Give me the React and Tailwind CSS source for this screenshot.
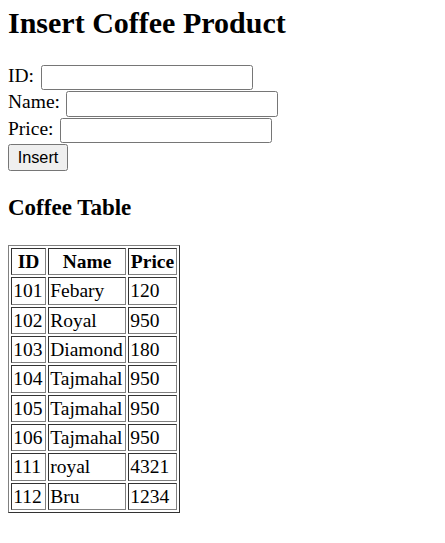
export default function App() {
  const rows = [
    ["101", "Febary", "120"],
    ["102", "Royal", "950"],
    ["103", "Diamond", "180"],
    ["104", "Tajmahal", "950"],
    ["105", "Tajmahal", "950"],
    ["106", "Tajmahal", "950"],
    ["111", "royal", "4321"],
    ["112", "Bru", "1234"],
  ];
  const cell =
    "border border-t-[#333333] border-l-[#333333] border-r-[#808080] border-b-[#808080] px-[1.2px] py-[1px] leading-[23.33px] h-[27.33px] align-middle";
  const widths = ["w-[35px]", "w-[78px]", "w-[49px]"];
  const fields = ["ID:", "Name:", "Price:"];
  return (
    <div className="min-h-screen bg-white text-black pl-[8px] pt-[5.6px] font-['Liberation_Serif',serif]">
      <h1 className="text-[30px] leading-[34px] font-bold">Insert Coffee Product</h1>
      <form className="mt-[25.4px] flex flex-col items-start gap-[1px]">
        {fields.map((f) => (
          <div key={f} className="flex items-center gap-[6.5px]">
            <span className="text-[19.5px] leading-[22px] -mt-[3px]">{f}</span>
            <input
              type="text"
              className="w-[212px] h-[25.33px] border border-[#767676] rounded-[2.5px] bg-white px-[2px] text-[16.3px] font-['Liberation_Sans',sans-serif]"
            />
          </div>
        ))}
        <button
          type="button"
          className="w-[60px] h-[27px] border border-[#767676] rounded-[2.5px] bg-[#efefef] text-center text-[16.3px] leading-[19px] font-['Liberation_Sans',sans-serif] text-black"
        >
          Insert
        </button>
      </form>
      <h3 className="mt-[24px] text-[23px] leading-[26px] font-bold">Coffee Table</h3>
      <table className="mt-[24.2px] border-separate border-spacing-[2px] border border-t-[#808080] border-l-[#808080] border-r-[#333333] border-b-[#333333] text-[19.5px]">
        <thead>
          <tr>
            {["ID", "Name", "Price"].map((h, i) => (
              <th key={h} className={`${cell} ${widths[i]} font-bold text-center`}>
                {h}
              </th>
            ))}
          </tr>
        </thead>
        <tbody>
          {rows.map((r) => (
            <tr key={r[0]}>
              {r.map((c, i) => (
                <td key={i} className={`${cell} ${widths[i]} text-left`}>
                  {c}
                </td>
              ))}
            </tr>
          ))}
        </tbody>
      </table>
    </div>
  );
}
